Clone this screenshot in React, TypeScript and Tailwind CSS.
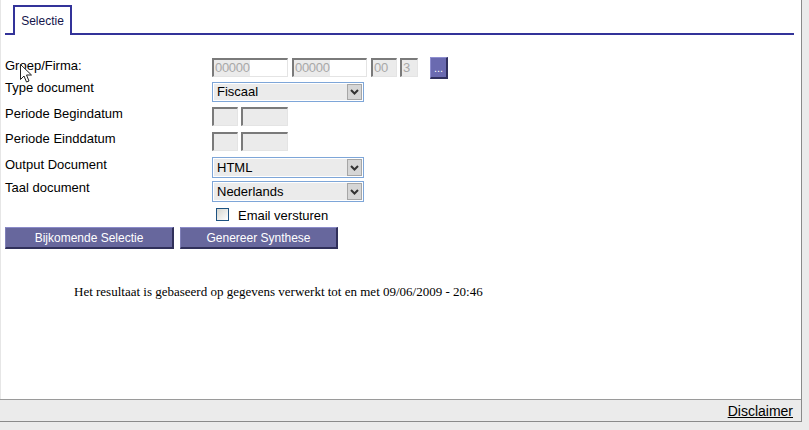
import React from 'react';

const DisabledBox: React.FC<{ width: string; text?: string; whiteFrom?: string }> = ({ width, text, whiteFrom }) => (
  <div className={`${width} h-[19px] flex bg-[#ebebeb] border-t-2 border-l-2 border-t-[#7a7a7a] border-l-[#7a7a7a] border-b border-r border-b-[#e4e4e4] border-r-[#e4e4e4] overflow-hidden`}>
    <span className="text-[13px] leading-[16px] text-[#a8a8a8] pl-px tracking-[-0.3px]">{text}</span>
    {whiteFrom && <span className={`${whiteFrom} h-full bg-white ml-auto`} />}
  </div>
);

const SelectBox: React.FC<{ value: string; height: string }> = ({ value, height }) => (
  <div className={`w-[152px] ${height} border border-[#7ea6d8] p-px bg-white flex`}>
    <div className="flex-1 bg-[#ebebeb] flex items-center pl-[3px] text-[13px] text-black">{value}</div>
    <div className="w-[15px] bg-[#d6d6d6] border border-[#a6a6a6] flex items-center justify-center">
      <svg width="9" height="6" viewBox="0 0 9 6">
        <path d="M1 1 L4.5 4.5 L8 1" fill="none" stroke="#333" strokeWidth="2" />
      </svg>
    </div>
  </div>
);

const PurpleButton: React.FC<{ label: string; width: string }> = ({ label, width }) => (
  <button className={`${width} h-[22px] bg-[#67679d] border-t border-l border-t-[#8b8bc9] border-l-[#8080b8] border-b-2 border-r-2 border-b-[#30305a] border-r-[#30305a] text-white text-[12px] leading-[18px] text-center`}>
    {label}
  </button>
);

export default function App() {
  return (
    <div className="w-[809px] h-[430px] bg-[#ebebeb] relative overflow-hidden" style={{ fontFamily: '"Liberation Sans", Arial, sans-serif' }}>
      <div className="w-[802px] border-r border-r-[#8a8a8a] border-b border-b-[#8a8a8a]">
        {/* content area */}
        <div className="h-[399px] bg-white border-l border-l-[#e6e6e6] pt-[5px]">
          {/* tab strip */}
          <div className="ml-[4px] w-[789px] h-[30px] border-b-2 border-b-[#333399] flex">
            <div className="ml-[8px] w-[59px] h-[30px] border-t-2 border-l-2 border-r-2 border-[#333399] bg-white -mb-[2px] pt-[7px] text-center text-[12px] leading-[14px] text-[#14144a]">
              Selectie
            </div>
          </div>

          {/* form */}
          <div className="mt-[22px] pl-[4px]">
            <div className="flex h-[25px]">
              <div className="w-[207px] text-[13px] leading-[15px] mt-px">Groep/Firma:</div>
              <div className="flex items-start">
                <div className="mt-px flex gap-[3px]">
                  <DisabledBox width="w-[76px]" text="00000" whiteFrom="w-[40px]" />
                  <div className="ml-px"><DisabledBox width="w-[75px]" text="00000" whiteFrom="w-[38px]" /></div>
                  <div className="ml-px"><DisabledBox width="w-[26px]" text="00" /></div>
                  <DisabledBox width="w-[18px]" text="3" />
                </div>
                <button className="ml-[12px] w-[18px] h-[22px] bg-[#6a6ab0] border-t border-l border-t-[#8e8ed0] border-l-[#8e8ed0] border-b-2 border-r-2 border-b-[#30305e] border-r-[#30305e] text-white text-[11px] leading-[14px]">
                  ...
                </button>
              </div>
            </div>

            <div className="flex h-[25px]">
              <div className="w-[207px] text-[13px] leading-[15px] -mt-[2px]">Type document</div>
              <SelectBox value="Fiscaal" height="h-[20px]" />
            </div>

            <div className="flex h-[25px]">
              <div className="w-[207px] text-[13px] leading-[15px] -mt-px">Periode Begindatum</div>
              <div className="flex gap-[3px]">
                <DisabledBox width="w-[26px] h-[18px]" />
                <DisabledBox width="w-[47px] h-[18px]" />
              </div>
            </div>

            <div className="flex h-[25px]">
              <div className="w-[207px] text-[13px] leading-[15px] -mt-px">Periode Einddatum</div>
              <div className="flex gap-[3px]">
                <DisabledBox width="w-[26px] h-[18px]" />
                <DisabledBox width="w-[47px] h-[18px]" />
              </div>
            </div>

            <div className="flex h-[24px]">
              <div className="w-[207px] text-[13px] leading-[15px]">Output Document</div>
              <SelectBox value="HTML" height="h-[21px]" />
            </div>

            <div className="flex h-[26px]">
              <div className="w-[207px] text-[13px] leading-[15px] -mt-px">Taal document</div>
              <SelectBox value="Nederlands" height="h-[21px]" />
            </div>

            <div className="flex h-[20px]">
              <div className="w-[207px]" />
              <div className="flex items-start pl-[4px] mt-px">
                <div className="w-[13px] h-[13px] border border-[#1d5281] bg-gradient-to-br from-[#d6d6cf] to-white" />
                <span className="ml-[9px] text-[13px] leading-[15px]">Email versturen</span>
              </div>
            </div>

            <div className="flex gap-[6px]">
              <PurpleButton label="Bijkomende Selectie" width="w-[169px]" />
              <PurpleButton label="Genereer Synthese" width="w-[158px]" />
            </div>
          </div>

          <p className="mt-[35px] ml-[73px] text-[13px] leading-[15px] text-black" style={{ fontFamily: '"Liberation Serif", "Times New Roman", serif' }}>
            Het resultaat is gebaseerd op gegevens verwerkt tot en met 09/06/2009 - 20:46
          </p>
        </div>

        {/* footer */}
        <div className="h-[22px] border-t border-t-[#9a9a9a] bg-[#ebebeb] flex items-end justify-end pr-[8px] pb-[2px]">
          <a className="text-[14px] leading-[16px] text-black underline">Disclaimer</a>
        </div>
      </div>

      {/* mouse pointer */}
      <svg className="absolute left-[20px] top-[64px]" width="13" height="20" viewBox="0 0 13 20">
        <path d="M0.5 0.5 L0.5 15.5 L4 12 L6.5 18 L9 17 L6.5 11 L11.5 11 Z" fill="white" stroke="#222" strokeWidth="1" strokeLinejoin="miter" />
      </svg>
    </div>
  );
}
